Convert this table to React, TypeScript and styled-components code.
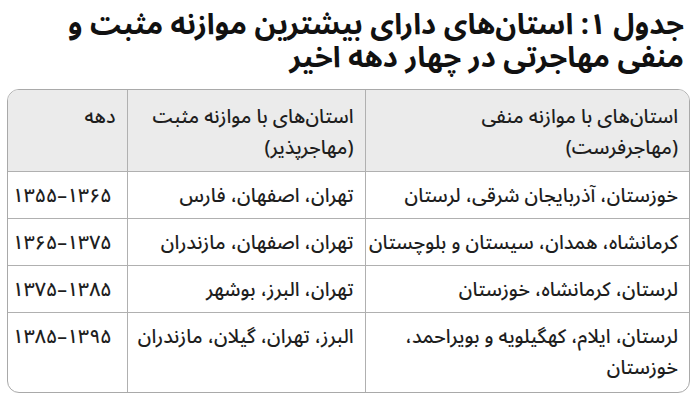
import React from "react";
import styled, { createGlobalStyle } from "styled-components";

const Global = createGlobalStyle`
  html, body { margin: 0; padding: 0; background: #ffffff; }
  body { font-family: "Noto Sans Arabic", "Vazirmatn", "DejaVu Sans", sans-serif; color: #1a1a1a; }
`;

const Page = styled.div`
  direction: rtl;
  width: 700px;
  height: 404px;
  box-sizing: border-box;
  padding: 8px 10px 0 7px;
  display: flex;
  flex-direction: column;
  gap: 15px;
`;

const Title = styled.h1`
  margin: 0;
  padding-right: 6px;
  font-size: 29px;
  font-weight: 700;
  line-height: 33px;
  color: #111;
  white-space: nowrap;
`;

const Frame = styled.div`
  border: 1px solid #a9a9a9;
  border-radius: 12px;
  overflow: hidden;
`;

const Table = styled.table`
  width: 100%;
  border-collapse: collapse;
  table-layout: fixed;
  font-size: 19.5px;
  font-weight: 500;
  line-height: 31px;
  color: #1e1e1e;
`;

const Col = styled.col<{ $w: number }>`
  width: ${(p) => p.$w}px;
`;

const HeadCell = styled.th`
  background: #ebebeb;
  font-weight: 500;
  text-align: right;
  vertical-align: top;
  padding: 11px 11px 8px 8px;
  border-left: 1px solid #b0b0b0;
  border-bottom: 1px solid #b0b0b0;
  white-space: nowrap;
  &:last-child { border-left: none; }
`;

const Cell = styled.td`
  text-align: right;
  vertical-align: top;
  padding: 8px 11px 7px 8px;
  border-left: 1px solid #b0b0b0;
  border-bottom: 1px solid #b0b0b0;
  white-space: nowrap;
  &:last-child { border-left: none; }
`;

const Row = styled.tr`
  &:last-child td { border-bottom: none; padding-bottom: 9px; }
`;

const Num = styled.span`
  direction: ltr;
  unicode-bidi: isolate;
  display: inline-block;
  white-space: nowrap;
  padding-right: 4px;
`;

const rows: { neg: React.ReactNode; pos: string; dec: string }[] = [
  {
    neg: "خوزستان، آذربایجان شرقی، لرستان",
    pos: "تهران، اصفهان، فارس",
    dec: "۱۳۵۵–۱۳۶۵",
  },
  {
    neg: "کرمانشاه، همدان، سیستان و بلوچستان",
    pos: "تهران، اصفهان، مازندران",
    dec: "۱۳۶۵–۱۳۷۵",
  },
  {
    neg: "لرستان، کرمانشاه، خوزستان",
    pos: "تهران، البرز، بوشهر",
    dec: "۱۳۷۵–۱۳۸۵",
  },
  {
    neg: (
      <>
        لرستان، ایلام، کهگیلویه و بویراحمد،
        <br />
        خوزستان
      </>
    ),
    pos: "البرز، تهران، گیلان، مازندران",
    dec: "۱۳۸۵–۱۳۹۵",
  },
];

export default function App() {
  return (
    <>
      <Global />
      <Page>
        <Title>
          جدول ۱: استان‌های دارای بیشترین موازنه مثبت و
          <br />
          منفی مهاجرتی در چهار دهه اخیر
        </Title>
        <Frame>
          <Table>
            <colgroup>
              <Col $w={324} />
              <Col $w={238} />
              <Col $w={119} />
            </colgroup>
            <thead>
              <tr>
                <HeadCell>
                  استان‌های با موازنه منفی
                  <br />
                  (مهاجرفرست)
                </HeadCell>
                <HeadCell>
                  استان‌های با موازنه مثبت
                  <br />
                  (مهاجرپذیر)
                </HeadCell>
                <HeadCell>دهه</HeadCell>
              </tr>
            </thead>
            <tbody>
              {rows.map((r, i) => (
                <Row key={i}>
                  <Cell>{r.neg}</Cell>
                  <Cell>{r.pos}</Cell>
                  <Cell>
                    <Num>{r.dec}</Num>
                  </Cell>
                </Row>
              ))}
            </tbody>
          </Table>
        </Frame>
      </Page>
    </>
  );
}
